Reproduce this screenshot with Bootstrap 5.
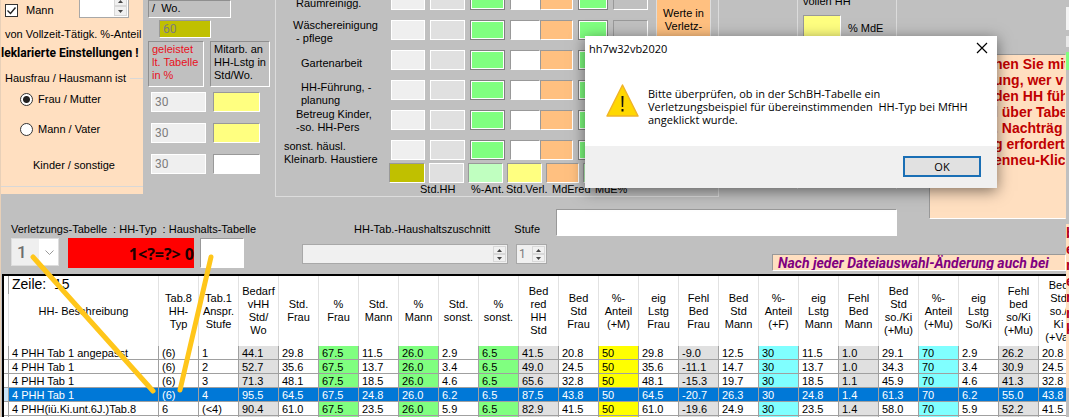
<!DOCTYPE html>
<html lang="de">
<head>
<meta charset="utf-8">
<meta name="viewport" content="width=device-width, initial-scale=1">
<title>hh7w32vb2020</title>
<link href="https://cdn.jsdelivr.net/npm/bootstrap@5.3.0/dist/css/bootstrap.min.css" rel="stylesheet">
<style>
body{background:#fff;color:#000;font:11px/13px "Liberation Sans",Arial,sans-serif;overflow:hidden}
.app{background:#c0c0c0;margin-right:7px;height:100vh;border-left:1px solid #e8d0b8}
.main{min-width:0;overflow:hidden}
.top{height:200px}
.peach{background:#ffdfc0}
input{font:12px/13px Roboto,"Liberation Sans",sans-serif;color:#000;border-radius:0;padding:0 3px;margin:0;min-width:0;display:block}
input:disabled{color:#7d7d7d}

/* settings panel */
.settings{display:grid;grid-template-rows:26px 17px 20px 30px 13px 46px 26px 8px 8px;align-items:center;width:142px;flex:none;white-space:nowrap;overflow:hidden}
.head-row{height:26px;padding-left:4px}
.tick,.dot{flex:none;width:13px;height:13px;appearance:none;background:#fff;border:1px solid #333;padding:0}
.tick:checked{background:#fff url("data:image/svg+xml,%3Csvg xmlns='http://www.w3.org/2000/svg' viewBox='0 0 11 11'%3E%3Cpath d='M1.500 5.500l3 3 5-6' fill='none' stroke='%23222' stroke-width='1.400'/%3E%3C/svg%3E")}
.dot{border-radius:50%}
.dot:checked{background:radial-gradient(circle,#222 3px,#fff 4px)}
.declared{font:bold 12px/16px Roboto,sans-serif}
.legend-line{border-top:1px solid #d8d8d8;flex:1}
.indent{padding-left:19px;gap:5px}

/* spin boxes */
.spin{border:1px solid #a8a8a8;background:#f0f0f0;display:flex;height:20px}
.spin input{flex:1;border:0;background:transparent;width:0;padding:0 2px}
.spin .arrows{width:14px;flex:none;display:flex;flex-direction:column;padding:1px 1px 1px 0}
.spin button{flex:1;border:1px solid #d8d8d8;background:#f0f0f0;padding:0;display:flex;align-items:center;justify-content:center;min-height:0}
.spin svg{width:5px;height:3px;fill:#444}
.spin.tall{width:50px;height:24px;background:#fff;margin:-6px 14px 0 0}
.spin.narrow{flex:0 0 31px}

/* weekly hours */
.work{width:122px;flex:none;margin-left:5px}
.tag{border:1px solid;border-color:#8f8f8f #fff #fff #8f8f8f;height:46px;padding:1px 0 0 3px;white-space:nowrap}
.tag.red{color:#e8101c}
.tags{display:grid;grid-template-columns:56px 60px;gap:6px}
.unit{width:83px;height:18px}
.olive{background:#c0c000}
.yel{background:#ffff80}
.light-green{background:#c0ffc0}
.sunk{border:1px solid;border-color:#999 #fff #fff #999}
.off{background:#efefef;border:1px solid #fff}
.hours{display:grid;grid-template-columns:55px 47px;gap:11px 7px;margin:5px 0 0 3px}
.hours input{width:100%;height:20px}
.total{width:52px;height:18px;margin:2px 0 3px 11px}

/* household groups */
.house{width:444px;height:197px;flex:none;border:1px solid #dcdcdc;border-top:0;margin-left:5px}
.house-labels{width:115px;flex:none;display:grid;grid-template-rows:10px 35px 25px 37px 27px 32px;align-items:end;white-space:nowrap}
.in1{padding-left:20px}.in2{padding-left:17px}.in3{padding-left:25px}.in4{padding-left:8px}
.cells{display:grid;grid-template-columns:34px 35px 35px 30px 28px 30px 35px;gap:10px 5px;margin-top:-10px}
.cells input{width:100%;height:20px}
.cells .c5{width:33px;margin-left:-5px}
.c1{background:#efefef;border:1px solid #fff}
.c2{background:#e0e0e0;border:1px solid #fff}
.c3,.c6{background:#80ff80;border:1px solid #808080;box-shadow:inset 0 0 0 1px #fff}
.c4,.c5,.c7{border:1px solid;border-color:#999 #fff #fff #999}
.c4{background:#fff}.c5,.orange{background:#ffc080}.c7{background:#c0c0c0}
.sums{display:grid;grid-template-columns:36px 35px 35px 35px 33px 32px;column-gap:4px;margin:3px 0 0 -2px}
.sums input{width:100%;height:20px}
.sum-labels{padding-left:144px;display:grid;grid-template-columns:51px 35px 46px 43px 40px;white-space:nowrap}
.values{width:55px;height:50px;background:#ffc080;border:1px solid #ddd;border-top:0;padding-top:7px;margin-left:8px;text-align:center}
.mde{width:100px;height:189px;flex:none;border:1px solid #dcdcdc;border-width:0 1px;margin-left:78px;padding-left:5px;white-space:nowrap}
.mde label{margin-top:-5px}
.mde input{width:38px;height:26px}
.mde .pct{gap:7px;padding-top:7px}
.hint{border:1px solid;border-color:#999 transparent #fff #999;height:165px;margin:54px 0 0 32px;flex:1;min-width:0;overflow:hidden;color:#c00000;font:bold 14px/16px "Liberation Sans",sans-serif;white-space:pre;padding:1px 0 0 64px}

/* selection bar */
.middle{height:74px;white-space:nowrap}
.mid-left{width:301px;padding:23px 0 0 10px}
.mid-spins{width:245px;padding-top:23px}
.combo{width:48px;height:28px;border:1px solid #ddd;border-radius:0;appearance:none;font:500 17px Roboto,sans-serif;padding:0 5px;background:url("data:image/svg+xml,%3Csvg xmlns='http://www.w3.org/2000/svg' viewBox='0 0 9 6'%3E%3Cpath d='M.5.5l4 4 4-4' fill='none' stroke='%23999'/%3E%3C/svg%3E") no-repeat 33px 11px/9px 6px,linear-gradient(90deg,#efefef 27px,#fff 27px)}
.combo:disabled{color:#6d6d6d;opacity:1}
.picks{gap:9px;padding-top:2px}
.match{width:126px;height:30px;background:red;color:#200000;font:bold 16px/32px "Open Sans",sans-serif;text-align:right;overflow:hidden}
.type-box{width:44px;height:30px;margin-left:-3px}
.wide{width:341px;height:27px;margin:9px 0 0 9px}
.banner{color:#800080;font:italic bold 14px/16px Roboto,sans-serif;width:294px;height:17px;padding-left:5px;margin:18px 0 0 auto;overflow:hidden}

/* result table */
.grid-wrap{flex:1;min-height:0;overflow:hidden;border-top:2px solid #000;border-left:2px solid #000;margin-left:1px;background:#fff}
.hh{table-layout:fixed;width:1075px;border-collapse:separate;border-spacing:0}
.hh th{font-weight:400;height:70px;vertical-align:middle;text-align:center;padding:0;border-right:1px solid #e2e2e2;white-space:pre}
.hh td{height:14px;padding:1px 0 0 3px;line-height:12px;border-right:1px solid #a0a0a0;border-bottom:1px solid #a0a0a0;white-space:nowrap;overflow:hidden}
.hh td.g{background:#e0e0e0}.hh td.n{background:#80ff80}.hh td.y{background:#ff0}.hh td.c{background:#80ffff}
.hh tr.sel td{background:#0078d7;color:#fff}
.hh tr.sel td:first-child{background:#cce4f7}
.count{left:7px;top:276px;width:99px;height:18px;background:#fff;border-left:1px solid #a0a0a0;padding-left:3px;font:14px/16px "Liberation Sans",sans-serif;white-space:pre}
.pointers{left:-1px;top:0;pointer-events:none}

/* message window */
.msg{left:584px;top:36px;width:412px;background:#fff;box-shadow:0 3px 14px rgba(0,0,0,.5);font:11px/13px "Open Sans",sans-serif}
.msg-title{height:24px;padding:0 9px 0 4px}
.msg-title span{font-size:11px}
.msg-title button,.ok{border:0;background:none;padding:0;color:#000}
.msg-body{height:86px;padding:23px 0 0 21px;gap:9px;white-space:pre}
.msg-foot{height:42px;background:#f0f0f0;padding:0 16px 1px 0}
.msg .ok{width:78px;height:21px;border:2px solid #1a6fb5;background:#e1e1e1;line-height:16px}

/* window behind, right edge */
.edge{width:3px;flex:none;overflow:hidden;padding-top:225px;font:bold 14px/16px "Liberation Sans",sans-serif;color:#b00020;background:linear-gradient(#c0c0c0 7px,#f4f4f4 7px 30px,#c0c0c0 30px 36px,#e8e8e8 36px 47px,#c0c0c0 47px 52px,#80ff80 52px 70px,#c0c0c0 70px 224px,#ffdfc0 224px 388px,#c0c0c0 388px)}
</style>
</head>
<body>
<div class="app d-flex position-relative">
 <div class="main d-flex flex-column flex-grow-1">
  <div class="top d-flex align-items-start flex-shrink-0">

   <section class="settings peach">
    <div class="head-row d-flex align-items-start justify-content-between">
     <div class="d-flex align-items-center gap-2 pt-1"><input class="tick" type="checkbox" id="mann" checked><label for="mann">Mann</label></div>
     <div class="spin tall"><input type="text" aria-label="Anteil"><div class="arrows"><button type="button" aria-label="mehr"><svg viewBox="0 0 5 3"><path d="M0 3L2.500 0 5 3z"/></svg></button><button type="button" aria-label="weniger"><svg viewBox="0 0 5 3"><path d="M0 0L2.500 3 5 0z"/></svg></button></div></div>
    </div>
    <div class="ps-1">von Vollzeit-Tätigk. %-Anteil</div>
    <div class="declared">leklarierte Einstellungen !</div>
    <div class="d-flex align-items-center gap-1"><span class="ps-1">Hausfrau / Hausmann ist</span><span class="legend-line"></span></div>
    <div class="d-flex align-items-center indent"><input class="dot" type="radio" name="wer" id="frau" checked><label for="frau">Frau / Mutter</label></div>
    <div class="d-flex align-items-center indent"><input class="dot" type="radio" name="wer" id="vater"><label for="vater">Mann / Vater</label></div>
    <div class="ms-4 ps-2">Kinder / sonstige</div>
    <div></div>
    <div class="legend-line align-self-start"></div>
   </section>

   <section class="work">
    <div class="tag unit">/&nbsp; Wo.</div>
    <input class="sunk olive total" value="60" aria-label="Stunden je Woche" disabled>
    <div class="tags">
     <div class="tag red">geleistet<br>lt. Tabelle<br>in %</div>
     <div class="tag">Mitarb. an<br>HH-Lstg in<br>Std/Wo.</div>
    </div>
    <div class="hours">
     <input class="off" value="30" aria-label="Frau %" disabled><input class="sunk yel" aria-label="Frau Std">
     <input class="off" value="30" aria-label="Mann %" disabled><input class="sunk yel" aria-label="Mann Std">
     <input class="off" value="30" aria-label="Kinder %" disabled><input class="sunk" aria-label="Kinder Std">
    </div>
   </section>

   <section class="house">
    <div class="d-flex align-items-start">
     <div class="house-labels">
      <div class="in1">Raumreinigg.</div>
      <div class="in2">Wäschereinigung<br>&nbsp;- pflege</div>
      <div class="in3">Gartenarbeit</div>
      <div class="in3">HH-Führung, -<br>planung</div>
      <div class="in1">Betreug Kinder,<br>-so. HH-Pers</div>
      <div class="in4">sonst. häusl.<br>Kleinarb. Haustiere</div>
     </div>
     <div>
      <div class="cells" id="cells"></div>
      <div class="sums">
       <input class="sunk olive" aria-label="Summe Std"><input class="sunk c2" aria-label="Summe Std.HH"><input class="sunk light-green" aria-label="Summe %-Ant."><input class="sunk yel" aria-label="Summe Std.Verl."><input class="sunk orange" aria-label="Summe MdEred"><input class="sunk light-green" aria-label="Summe MdE%">
      </div>
     </div>
     <div class="values">Werte in<br>Verletz-</div>
    </div>
    <div class="sum-labels"><span>Std.HH</span><span>%-Ant.</span><span>Std.Verl.</span><span>MdEred</span><span>MdE%</span></div>
   </section>

   <section class="mde">
    <div class="d-flex flex-column">
     <label for="mde">vollen HH</label>
     <div class="d-flex align-items-center pct"><input class="sunk yel" id="mde"><span>% MdE</span></div>
    </div>
   </section>

   <section class="hint peach">nen Sie mit
ung, wer v
den HH füh
l über Tabe
. Nachträg
g erfordert
enneu-Klick</section>
  </div>

  <div class="middle d-flex flex-shrink-0">
   <div class="mid-left flex-shrink-0">
    <label for="tab">Verletzungs-Tabelle&nbsp; : HH-Typ&nbsp; : Haushalts-Tabelle</label>
    <div class="d-flex picks">
     <select class="combo" id="tab" disabled><option>1</option></select>
     <div class="match">1&lt;?=?&gt; 0</div>
     <input class="sunk type-box" aria-label="Haushalts-Tabelle">
    </div>
   </div>
   <div class="mid-spins flex-shrink-0">
    <div class="d-flex"><label for="zuschnitt" class="ms-5 ps-1">HH-Tab.-Haushaltszuschnitt</label><label for="stufe" class="ms-4">Stufe</label></div>
    <div class="d-flex gap-2 mt-2">
     <div class="spin flex-grow-1"><input id="zuschnitt" disabled><div class="arrows"><button type="button" aria-label="mehr" disabled><svg viewBox="0 0 5 3"><path d="M0 3L2.500 0 5 3z"/></svg></button><button type="button" aria-label="weniger" disabled><svg viewBox="0 0 5 3"><path d="M0 0L2.500 3 5 0z"/></svg></button></div></div>
     <div class="spin narrow"><input id="stufe" value="1" disabled><div class="arrows"><button type="button" aria-label="mehr" disabled><svg viewBox="0 0 5 3"><path d="M0 3L2.500 0 5 3z"/></svg></button><button type="button" aria-label="weniger" disabled><svg viewBox="0 0 5 3"><path d="M0 0L2.500 3 5 0z"/></svg></button></div></div>
    </div>
   </div>
   <div class="flex-grow-1">
    <input class="sunk wide" aria-label="Haushaltszuschnitt">
    <div class="banner peach sunk">Nach jeder Dateiauswahl-Änderung auch bei</div>
   </div>
  </div>

  <div class="grid-wrap"><table class="hh" id="hh"></table></div>
 </div>
 <div class="edge">b<br>e<br>r<br>e<br>r<br>r<br>k</div>

 <div class="count position-absolute">Zeile:  15</div>
 <svg class="pointers position-absolute" width="260" height="417" viewBox="0 0 260 417" fill="none" stroke="#ffc61a" stroke-width="5" stroke-linecap="round"><path d="M33 257L153 391M211 257L180 390"/></svg>

 <div class="msg position-absolute" role="dialog" aria-label="hh7w32vb2020">
  <div class="msg-title d-flex align-items-center justify-content-between"><span>hh7w32vb2020</span><button type="button" class="d-flex" aria-label="Schließen"><svg width="12" height="12" viewBox="0 0 12 12" stroke="#000" stroke-width="1.200"><path d="M1 1l10 10M11 1L1 11"/></svg></button></div>
  <div class="msg-body d-flex align-items-start"><svg width="33" height="34" viewBox="0 0 33 34"><path d="M16.500 2L32 33H1z" fill="#ffd800" stroke="#f0b429" stroke-width="1.500" stroke-linejoin="round"/><path d="M15.500 13h2l-.3 11h-1.400z" fill="#111"/><rect x="15.500" y="26" width="2" height="2.500" fill="#111"/></svg><div class="pt-1">Bitte überprüfen, ob in der SchBH-Tabelle ein
Verletzungsbeispiel für übereinstimmenden  HH-Typ bei MfHH
angeklickt wurde.</div></div>
  <div class="msg-foot d-flex align-items-center justify-content-end"><button type="button" class="ok">OK</button></div>
 </div>
</div>

<script>
const kinds = ['Std', 'Std.HH', '%-Ant.', 'Std.Verl.', 'MdEred', 'MdE%', 'Wert'];
let cells = '';
for (let r = 1; r <= 6; r++) kinds.forEach((k, i) => cells += `<input class="c${i + 1}" aria-label="${k} ${r}">`);
document.getElementById('cells').innerHTML = cells;

const heads = ['HH- Beschreibung', 'Tab.8\nHH-\nTyp', 'Tab.1\nAnspr.\nStufe', 'Bedarf\nvHH\nStd/\nWo', 'Std.\nFrau', '%\nFrau', 'Std.\nMann', '%\nMann', 'Std.\nsonst.', '%\nsonst.', 'Bed\nred\nHH\nStd', 'Bed\nStd\nFrau', '%-\nAnteil\n(+M)', 'eig\nLstg\nFrau', 'Fehl\nBed\nFrau', 'Bed\nStd\nMann', '%-\nAnteil\n(+F)', 'eig\nLstg\nMann', 'Fehl\nBed\nMann', 'Bed\nStd\nso./Ki\n(+Mu)', '%-\nAnteil\n(+Mu)', 'eig\nLstg\nSo/Ki', 'Fehl\nbed\nso/Ki\n(+Mu)', 'Bed\nStd\nso./\nKi\n(+Va)'];
const tint = '...g.n.n.ng.y.g.c.g.c.g.'.split('');
const rows = [
 '4 PHH Tab 1 angepasst|(6)|1|44.1|29.8|67.5|11.5|26.0|2.9|6.5|41.5|20.8|50|29.8|-9.0|12.5|30|11.5|1.0|29.1|70|2.9|26.2|20.8',
 '4 PHH Tab 1|(6)|2|52.7|35.6|67.5|13.7|26.0|3.4|6.5|49.0|24.5|50|35.6|-11.1|14.7|30|13.7|1.0|34.3|70|3.4|30.9|24.5',
 '4 PHH Tab 1|(6)|3|71.3|48.1|67.5|18.5|26.0|4.6|6.5|65.6|32.8|50|48.1|-15.3|19.7|30|18.5|1.1|45.9|70|4.6|41.3|32.8',
 '4 PHH Tab 1|(6)|4|95.5|64.5|67.5|24.8|26.0|6.2|6.5|87.5|43.8|50|64.5|-20.7|26.3|30|24.8|1.4|61.3|70|6.2|55.0|43.8',
 '4 PHH(iü.Ki.unt.6J.)Tab.8|6|(<4)|90.4|61.0|67.5|23.5|26.0|5.9|6.5|82.9|41.5|50|61.0|-19.6|24.9|30|23.5|1.4|58.0|70|5.9|52.2|41.5',
 '|||||||||||||||||||||||'
];
document.getElementById('hh').innerHTML =
 '<colgroup><col style="width:5px"><col style="width:150px">' + '<col style="width:40px">'.repeat(23) + '</colgroup>' +
 '<thead><tr><th></th>' + heads.map(h => `<th>${h}</th>`).join('') + '</tr></thead><tbody>' +
 rows.map((r, i) => `<tr${i === 3 ? ' class="sel"' : ''}><td></td>` + r.split('|').map((v, c) => `<td class="${tint[c] === '.' ? '' : tint[c]}">${v.replace('<', '&lt;')}</td>`).join('') + '</tr>').join('') + '</tbody>';
</script>
<script src="https://cdn.jsdelivr.net/npm/bootstrap@5.3.0/dist/js/bootstrap.bundle.min.js"></script>
</body>
</html>
